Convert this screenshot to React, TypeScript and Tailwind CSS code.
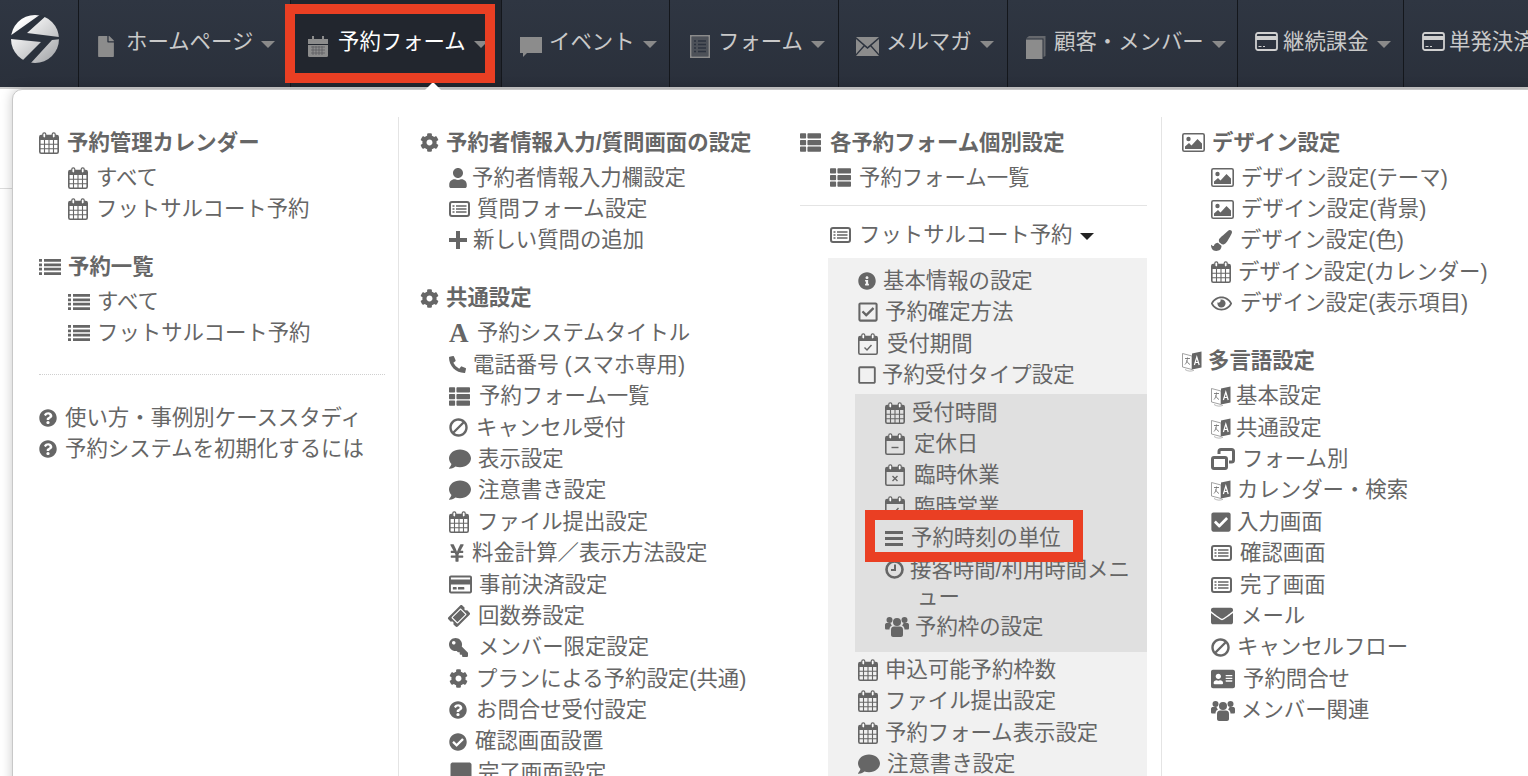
import type { ReactNode } from 'react'
import {
  FaCog, FaUser, FaPhoneAlt, FaThList, FaBan, FaComment, FaYenSign,
  FaRegCreditCard, FaTicketAlt, FaKey, FaQuestionCircle, FaCheckCircle, FaInfoCircle,
  FaRegCheckSquare, FaRegSquare, FaPaintBrush,
  FaRegEye, FaCheckSquare, FaEnvelope, FaAddressCard, FaFile, FaSquare,
} from 'react-icons/fa'

// FontAwesome 4 style calendar, the package only has the newer look
function Calendar({ mark = 'grid' }: { mark?: 'grid' | 'minus' | 'times' | 'check' }) {
  return (
    <svg viewBox="0 0 20 22" className="w-[20px] h-[22px]" fill="none" stroke="currentColor">
      <rect x="0.800" y="3.500" width="18.400" height="17.700" rx="1.400" strokeWidth="1.600" />
      <rect x="1" y="3.500" width="18" height="4.500" fill="currentColor" stroke="none" />
      <rect x="3.800" y="0.800" width="3" height="5.200" rx="1.400" fill="#fff" strokeWidth="1.200" />
      <rect x="13.200" y="0.800" width="3" height="5.200" rx="1.400" fill="#fff" strokeWidth="1.200" />
      {mark === 'grid' && <path d="M5.500 8v13M10 8v13M14.500 8v13M1 12.300h18M1 16.700h18" strokeWidth="1.100" />}
      {mark === 'minus' && <path d="M6.500 14.500h7" strokeWidth="1.400" />}
      {mark === 'times' && <path d="M7.500 12l5 5M12.500 12l-5 5" strokeWidth="1.400" />}
      {mark === 'check' && <path d="M6.500 14.500l2.500 2.500 4.500-5" strokeWidth="1.400" />}
    </svg>
  )
}

function ListIcon() {
  return (
    <svg viewBox="0 0 22 16" className="w-[22px] h-[16px]" fill="currentColor">
      <path d="M0 0h3v2.800H0zM5 0h17v2.800H5zM0 4.400h3v2.800H0zM5 4.400h17v2.800H5zM0 8.800h3v2.800H0zM5 8.800h17v2.800H5zM0 13.200h3V16H0zM5 13.200h17V16H5z" />
    </svg>
  )
}

function ListAlt() {
  return (
    <svg viewBox="0 0 21 16" className="w-[21px] h-[16px]" fill="none" stroke="currentColor">
      <rect x="1" y="1" width="19" height="14" rx="2" strokeWidth="2" />
      <path d="M3.500 5h2M7 5h10.500M3.500 8h2M7 8h10.500M3.500 11h2M7 11h10.500" strokeWidth="1.500" />
    </svg>
  )
}

function Picture() {
  return (
    <svg viewBox="0 0 23 19" className="w-[23px] h-[19px]" fill="currentColor">
      <rect x="0.800" y="0.800" width="21.400" height="17.400" rx="1.500" fill="none" stroke="currentColor" strokeWidth="1.600" />
      <circle cx="6.500" cy="6" r="2.200" />
      <path d="M3 16v-2.500l4-3.500 2.500 2.500 6-6.500L20 10.500V16z" />
    </svg>
  )
}

function Translate() {
  return (
    <svg viewBox="0 0 20 22" className="w-[20px] h-[22px]">
      <path d="M0.500 3.500L10 6v13.500L0.500 17z" fill="#fff" stroke="#8a8a8a" strokeWidth="0.800" />
      <path d="M3 8.500h5M5.500 7.500c0 3-1 5.500-2.500 7M4.500 10.500c.8 1.800 2 3.200 3.500 4" fill="none" stroke="#777" strokeWidth="0.900" />
      <path d="M10 3.500l9.500-2v16L10 19.500z" fill="#666" />
      <path d="M12.400 15l2.400-8 2.400 8M13.200 12.500h3.200" fill="none" stroke="#fff" strokeWidth="1.200" />
      <path d="M3 19.500c3 2 6 2 9 0.800" fill="none" stroke="#999" strokeWidth="0.700" />
    </svg>
  )
}

function Users() {
  return (
    <svg viewBox="0 0 24 21" className="w-[24px] h-[21px]" fill="currentColor">
      <circle cx="12" cy="6" r="4" />
      <circle cx="4.500" cy="4" r="3" />
      <circle cx="19.500" cy="4" r="3" />
      <path d="M6 13.500c0-2 1.500-3 3-3h6c1.500 0 3 1 3 3V19c0 1-1 2-2 2H8c-1 0-2-1-2-2z" />
      <path d="M0 9c0-1.500 1-2 2-2h3.500c.3 1 1 2 1.500 2.500-1.500.5-2.500 2-2.500 4H1.500C.5 13.500 0 13 0 12zM24 9c0-1.500-1-2-2-2h-3.500c-.3 1-1 2-1.500 2.500 1.500.5 2.500 2 2.500 4h3c1 0 1.500-.5 1.500-1.500z" />
    </svg>
  )
}

function WindowPair() {
  return (
    <svg viewBox="0 0 24 22" className="w-[24px] h-[22px]" fill="none" stroke="currentColor" strokeWidth="3">
      <rect x="1.500" y="9.500" width="14" height="11" rx="1.500" />
      <path d="M8 6V3.500C8 2.400 8.800 1.500 10 1.500h10.500c1.100 0 2 .9 2 2V12c0 1.100-.9 2-2 2H18" />
    </svg>
  )
}

function Logo() {
  return (
    <svg viewBox="0 0 48 48" className="w-[48px] h-[48px]">
      <defs>
        <linearGradient id="logoFill" x1="0.2" y1="0.1" x2="0.9" y2="0.9">
          <stop offset="0" stopColor="#ffffff" />
          <stop offset="1" stopColor="#a9abae" />
        </linearGradient>
      </defs>
      <circle cx="24" cy="24" r="24" fill="url(#logoFill)" />
      <path d="M30 -1 L36 0 L16 18 L49 22 L49 24 L41 25 L19 49 L11 46 L30 27 L-1 24 L-1 21 Z" fill="#2b323d" />
    </svg>
  )
}

function NavCalendar() {
  return (
    <svg viewBox="0 0 20 21" className="w-[20px] h-[21px]" fill="currentColor">
      <path d="M0 3h4V0h2v3h8V0h2v3h4v5H0z" />
      <path d="M0 9h20v10.500a1.500 1.500 0 0 1-1.500 1.500h-17A1.500 1.500 0 0 1 0 19.500z" />
      <path d="M3 11h14M3 14h14M3 17h14M5 10v9M8 10v9M11 10v9M14 10v9" stroke="#22262e" strokeWidth="0.700" opacity="0.500" />
    </svg>
  )
}

function NavBubble() {
  return (
    <svg viewBox="0 0 22 22" className="w-[22px] h-[22px]" fill="currentColor">
      <path d="M0 1h22v16H7l-4 4 0-4H0z" />
    </svg>
  )
}

function NavForm() {
  return (
    <svg viewBox="0 0 20 23" className="w-[20px] h-[23px]" fill="none" stroke="currentColor">
      <rect x="0.800" y="0.800" width="18.400" height="21.400" strokeWidth="1.600" />
      <rect x="2" y="2" width="16" height="19" fill="currentColor" opacity="0.350" stroke="none" />
      <path d="M4 6h2M8 6h8M4 9.500h2M8 9.500h8M4 13h2M8 13h8M4 16.500h2M8 16.500h8" stroke="#2c333f" strokeWidth="1.300" />
    </svg>
  )
}

function NavMail() {
  return (
    <svg viewBox="0 0 23 19" className="w-[23px] h-[19px]" fill="currentColor">
      <path d="M0 0h23L11.500 10z" />
      <path d="M0 2l7.500 6.500L0 17zM23 2l-7.500 6.500L23 17zM8.500 9.500l3 2.500 3-2.500L23 19H0z" />
    </svg>
  )
}

function NavBook() {
  return (
    <svg viewBox="0 0 20 25" className="w-[20px] h-[25px]" fill="currentColor">
      <path d="M0 4.500L3 2h16.500v20l-2 1V4.500z" opacity="0.600" />
      <path d="M0 5.500h16.500V25H0z" />
    </svg>
  )
}

function NavCard() {
  return (
    <svg viewBox="0 0 23 19" className="w-[23px] h-[19px]" fill="none" stroke="#d0d0d0">
      <rect x="1" y="1" width="21" height="17" rx="2" strokeWidth="1.800" />
      <path d="M1 6h21" strokeWidth="4" />
      <path d="M3.500 14.500h3M8 14.500h2" strokeWidth="1.200" />
    </svg>
  )
}

interface Item {
  icon: ReactNode
  text: string
  w: string
  caret?: boolean
}

const cal = <Calendar />
const gear = <FaCog className="w-[19px] h-[19px]" />
const list = <ListIcon />
const listAlt = <ListAlt />
const thList = <FaThList className="w-[21px] h-[21px]" />
const help = <FaQuestionCircle className="w-[18px] h-[18px]" />
const comment = <FaComment className="w-[22px] h-[22px]" />
const picture = <Picture />
const translate = <Translate />
const users = <Users />
const ban = <FaBan className="w-[19px] h-[19px] -scale-x-100" />

function Row({ item }: { item: Item }) {
  return (
    <div className="flex items-center h-[31.4px] whitespace-nowrap">
      <span className={`${item.w} shrink-0 flex items-center`}>{item.icon}</span>
      <span>{item.text}</span>
      {item.caret && <span className="ml-[8px] mt-[3px] w-0 h-0 border-x-[7px] border-x-transparent border-t-[7px] border-t-[#222]" />}
    </div>
  )
}

function Heading({ icon, text, w }: { icon: ReactNode; text: string; w: string }) {
  return (
    <div className="flex items-center h-[31.4px] mb-[3.6px] font-bold whitespace-nowrap">
      <span className={`${w} shrink-0 flex items-center`}>{icon}</span>
      <span>{text}</span>
    </div>
  )
}

function Rows({ items }: { items: Item[] }) {
  return (
    <>
      {items.map(item => (
        <Row key={item.text} item={item} />
      ))}
    </>
  )
}

const navItems = [
  { label: 'ホームページ', w: 'w-[212px]', pl: 'pl-[19px]', iw: 'w-[28px] mt-[7px]', icon: <FaFile className="w-[16px] h-[21px]" /> },
  { label: '予約フォーム', w: 'w-[211px]', pl: 'pl-[17px]', iw: 'w-[30px] mt-[7px]', active: true, icon: <NavCalendar /> },
  { label: 'イベント', w: 'w-[168px]', pl: 'pl-[18px]', iw: 'w-[29px] mt-[7px]', icon: <NavBubble /> },
  { label: 'フォーム', w: 'w-[169px]', pl: 'pl-[20px]', iw: 'w-[28px] mt-[7px]', icon: <NavForm /> },
  { label: 'メルマガ', w: 'w-[169px]', pl: 'pl-[17px]', iw: 'w-[30px] mt-[7px]', icon: <NavMail /> },
  { label: '顧客・メンバー', w: 'w-[230px]', pl: 'pl-[18px]', iw: 'w-[28px] mt-[7px]', icon: <NavBook /> },
  { label: '継続課金', w: 'w-[166px]', pl: 'pl-[17px]', iw: 'w-[28px] mb-[3px]', icon: <NavCard /> },
  { label: '単発決済', w: 'w-[126px]', pl: 'pl-[18px]', iw: 'w-[27px] mb-[3px]', icon: <NavCard /> },
]

export default function App() {
  return (
    <div className="relative h-screen overflow-hidden bg-white font-['Liberation_Sans','Noto_Sans_CJK_JP',sans-serif] text-[21.4px] text-[#666]">
      {/* Top navigation */}
      <nav className="flex h-[87px] overflow-hidden bg-gradient-to-b from-[#2f3642] to-[#2a303b]">
        <div className="w-[79px] shrink-0 border-r border-[#14171c] pl-[11px] pt-[15px]">
          <Logo />
        </div>
        {navItems.map(item => (
          <div
            key={item.label}
            className={`${item.w} ${item.pl} shrink-0 border-r border-[#14171c] flex items-center whitespace-nowrap pb-[1px] ${item.active ? 'bg-[#22262e]' : ''}`}
          >
            <span className={`${item.iw} shrink-0 text-[#8c8c8c]`}>{item.icon}</span>
            <span className={`mb-[1px] ${item.active ? 'text-white' : 'text-[#c9c9c9]'}`}>{item.label}</span>
            <span className="ml-[8px] mt-[3px] w-0 h-0 border-x-[7px] border-x-transparent border-t-[7px] border-t-[#8a8a8a]" />
          </div>
        ))}
      </nav>
      <div className="h-[102px] border-t-[2px] border-b border-t-[#cfcfcf] border-b-[#dcdcdc]" />

      {/* Open dropdown menu */}
      <div className="absolute left-[12px] right-[-2px] top-[89px] h-[720px] flex bg-white border border-[#c8c8c8] rounded-tl-[10px] shadow-[0_0_12px_rgba(0,0,0,0.22)]">
        <span className="absolute left-[412px] top-[-8px] w-0 h-0 border-x-[8px] border-x-transparent border-b-[8px] border-b-white" />

        <div className="w-[386px] shrink-0 mt-[27px] pt-[10px] pl-[26px] pr-[13px] border-r border-[#e4e4e4]">
          <Heading icon={cal} text="予約管理カレンダー" w="w-[28px]" />
          <div className="pl-[29px]">
            <Rows items={[
              { icon: cal, text: 'すべて', w: 'w-[28px]' },
              { icon: cal, text: 'フットサルコート予約', w: 'w-[28px]' },
            ]} />
          </div>
          <div className="mt-[26.600px]">
            <Heading icon={list} text="予約一覧" w="w-[29px]" />
            <div className="pl-[29px]">
              <Rows items={[
                { icon: list, text: 'すべて', w: 'w-[29px]' },
                { icon: list, text: 'フットサルコート予約', w: 'w-[29px]' },
              ]} />
            </div>
          </div>
          <div className="mt-[25px] mb-[27px] border-t border-dotted border-[#cfcfcf]" />
          <Rows items={[
            { icon: help, text: '使い方・事例別ケーススタディ', w: 'w-[26px]' },
            { icon: help, text: '予約システムを初期化するには', w: 'w-[26px]' },
          ]} />
        </div>

        <div className="w-[386px] shrink-0 mt-[27px] pt-[10px] pl-[21px]">
          <Heading icon={gear} text="予約者情報入力/質問画面の設定" w="w-[26px]" />
          <div className="pl-[29px]">
            <Rows items={[
              { icon: <FaUser className="w-[18px] h-[20px]" />, text: '予約者情報入力欄設定', w: 'w-[23px]' },
              { icon: listAlt, text: '質問フォーム設定', w: 'w-[28px]' },
              {
                icon: (
                  <svg viewBox="0 0 18 18" className="w-[18px] h-[18px]" fill="currentColor">
                    <path d="M7 0h4v7h7v4h-7v7H7v-7H0V7h7z" />
                  </svg>
                ),
                text: '新しい質問の追加',
                w: 'w-[24px]',
              },
            ]} />
          </div>
          <div className="mt-[26.600px]">
            <Heading icon={gear} text="共通設定" w="w-[26px]" />
            <div className="pl-[29px]">
              <Rows items={[
                { icon: <span className="font-['Liberation_Serif',serif] font-bold text-[27px] leading-none">A</span>, text: '予約システムタイトル', w: 'w-[28px]' },
                { icon: <FaPhoneAlt className="w-[17px] h-[17px]" />, text: '電話番号 (スマホ専用)', w: 'w-[24px]' },
                { icon: thList, text: '予約フォーム一覧', w: 'w-[30px]' },
                { icon: ban, text: 'キャンセル受付', w: 'w-[27px]' },
                { icon: comment, text: '表示設定', w: 'w-[29px]' },
                { icon: comment, text: '注意書き設定', w: 'w-[29px]' },
                { icon: cal, text: 'ファイル提出設定', w: 'w-[28px]' },
                { icon: <FaYenSign className="w-[16px] h-[20px]" />, text: '料金計算／表示方法設定', w: 'w-[23px]' },
                { icon: <FaRegCreditCard className="w-[23px] h-[23px]" />, text: '事前決済設定', w: 'w-[30px]' },
                { icon: <FaTicketAlt className="w-[20px] h-[20px] -rotate-45" />, text: '回数券設定', w: 'w-[29px]' },
                { icon: <FaKey className="w-[19px] h-[19px] -scale-x-100" />, text: 'メンバー限定設定', w: 'w-[29px]' },
                { icon: gear, text: 'プランによる予約設定(共通)', w: 'w-[27px]' },
                { icon: help, text: 'お問合せ受付設定', w: 'w-[27px]' },
                { icon: <FaCheckCircle className="w-[18px] h-[18px]" />, text: '確認画面設置', w: 'w-[26px]' },
                { icon: <FaSquare className="w-[24px] h-[24px]" />, text: '完了画面設定', w: 'w-[29px]' },
              ]} />
            </div>
          </div>
        </div>

        <div className="w-[377px] shrink-0 mt-[27px] pt-[10px] pl-[15px] pr-[14px] border-r border-[#e4e4e4]">
          <Heading icon={thList} text="各予約フォーム個別設定" w="w-[30px]" />
          <div className="pl-[30px]">
            <Row item={{ icon: thList, text: '予約フォーム一覧', w: 'w-[29px]' }} />
          </div>
          <div className="mt-[12px] mb-[13px] border-t border-[#e4e4e4]" />
          <div className="pl-[30px]">
            <Row item={{ icon: listAlt, text: 'フットサルコート予約', w: 'w-[29px]', caret: true }} />
          </div>
          <div className="mt-[7.600px] ml-[28px] pt-[7px] pl-[30px] bg-[#f1f1f1] h-[560px]">
            <Rows items={[
              { icon: <FaInfoCircle className="w-[18px] h-[18px]" />, text: '基本情報の設定', w: 'w-[25px]' },
              { icon: <FaRegCheckSquare className="w-[20px] h-[22px]" />, text: '予約確定方法', w: 'w-[27px]' },
              { icon: <Calendar mark="check" />, text: '受付期間', w: 'w-[29px]' },
              { icon: <FaRegSquare className="w-[18px] h-[20px]" />, text: '予約受付タイプ設定', w: 'w-[24px]' },
            ]} />
            <div className="mt-[3px] mb-[2px] ml-[-3px] pl-[30px] pt-[3px] pb-[10px] bg-[#e0e0e0]">
              <Rows items={[
                { icon: cal, text: '受付時間', w: 'w-[27px]' },
                { icon: <Calendar mark="minus" />, text: '定休日', w: 'w-[29px]' },
                { icon: <Calendar mark="times" />, text: '臨時休業', w: 'w-[29px]' },
                { icon: <Calendar mark="check" />, text: '臨時営業', w: 'w-[29px]' },
                {
                  icon: (
                    <svg viewBox="0 0 18 15" className="w-[18px] h-[15px]" fill="currentColor">
                      <path d="M0 0h18v3H0zM0 6h18v3H0zM0 12h18v3H0z" />
                    </svg>
                  ),
                  text: '予約時刻の単位',
                  w: 'w-[26px]',
                },
              ]} />
              <div className="flex items-center h-[31.4px] whitespace-nowrap">
                <span className="w-[25px] shrink-0 flex items-center">
                  <svg viewBox="0 0 19 19" className="w-[19px] h-[19px]" fill="none" stroke="currentColor">
                    <circle cx="9.500" cy="9.500" r="8" strokeWidth="2.600" />
                    <path d="M10 4.500v5.500H6" strokeWidth="2" />
                  </svg>
                </span>
                <span>接客時間/利用時間メニ</span>
              </div>
              <div className="h-[25.6px] leading-[25.6px] pl-[32px]">ュー</div>
              <Row item={{ icon: users, text: '予約枠の設定', w: 'w-[30px]' }} />
            </div>
            <Rows items={[
              { icon: cal, text: '申込可能予約枠数', w: 'w-[27px]' },
              { icon: cal, text: 'ファイル提出設定', w: 'w-[27px]' },
              { icon: cal, text: '予約フォーム表示設定', w: 'w-[27px]' },
              { icon: comment, text: '注意書き設定', w: 'w-[29px]' },
            ]} />
          </div>
        </div>

        <div className="flex-1 mt-[27px] pt-[10px] pl-[20px]">
          <Heading icon={picture} text="デザイン設定" w="w-[30px]" />
          <div className="pl-[29px]">
            <Rows items={[
              { icon: picture, text: 'デザイン設定(テーマ)', w: 'w-[30px]' },
              { icon: picture, text: 'デザイン設定(背景)', w: 'w-[30px]' },
              { icon: <FaPaintBrush className="w-[21px] h-[21px]" />, text: 'デザイン設定(色)', w: 'w-[29px]' },
              { icon: cal, text: 'デザイン設定(カレンダー)', w: 'w-[27px]' },
              { icon: <FaRegEye className="w-[21px] h-[21px]" />, text: 'デザイン設定(表示項目)', w: 'w-[29px]' },
            ]} />
          </div>
          <div className="mt-[26.600px]">
            <Heading icon={translate} text="多言語設定" w="w-[26px]" />
            <div className="pl-[29px]">
              <Rows items={[
                { icon: translate, text: '基本設定', w: 'w-[25px]' },
                { icon: translate, text: '共通設定', w: 'w-[25px]' },
                { icon: <WindowPair />, text: 'フォーム別', w: 'w-[31px]' },
                { icon: translate, text: 'カレンダー・検索', w: 'w-[26px]' },
                { icon: <FaCheckSquare className="w-[20px] h-[22px]" />, text: '入力画面', w: 'w-[26px]' },
                { icon: listAlt, text: '確認画面', w: 'w-[29px]' },
                { icon: listAlt, text: '完了画面', w: 'w-[29px]' },
                { icon: <FaEnvelope className="w-[22px] h-[22px]" />, text: 'メール', w: 'w-[30px]' },
                { icon: ban, text: 'キャンセルフロー', w: 'w-[26px]' },
                { icon: <FaAddressCard className="w-[24px] h-[22px]" />, text: '予約問合せ', w: 'w-[32px]' },
                { icon: users, text: 'メンバー関連', w: 'w-[30px]' },
              ]} />
            </div>
          </div>
        </div>
      </div>

      {/* Red annotation boxes */}
      <div className="absolute left-[285px] top-[4px] w-[210px] h-[79px] border-[10px] border-[#ea3f23]" />
      <div className="absolute left-[865px] top-[510px] w-[218px] h-[52px] border-[10px] border-[#ea3f23]" />
    </div>
  )
}
